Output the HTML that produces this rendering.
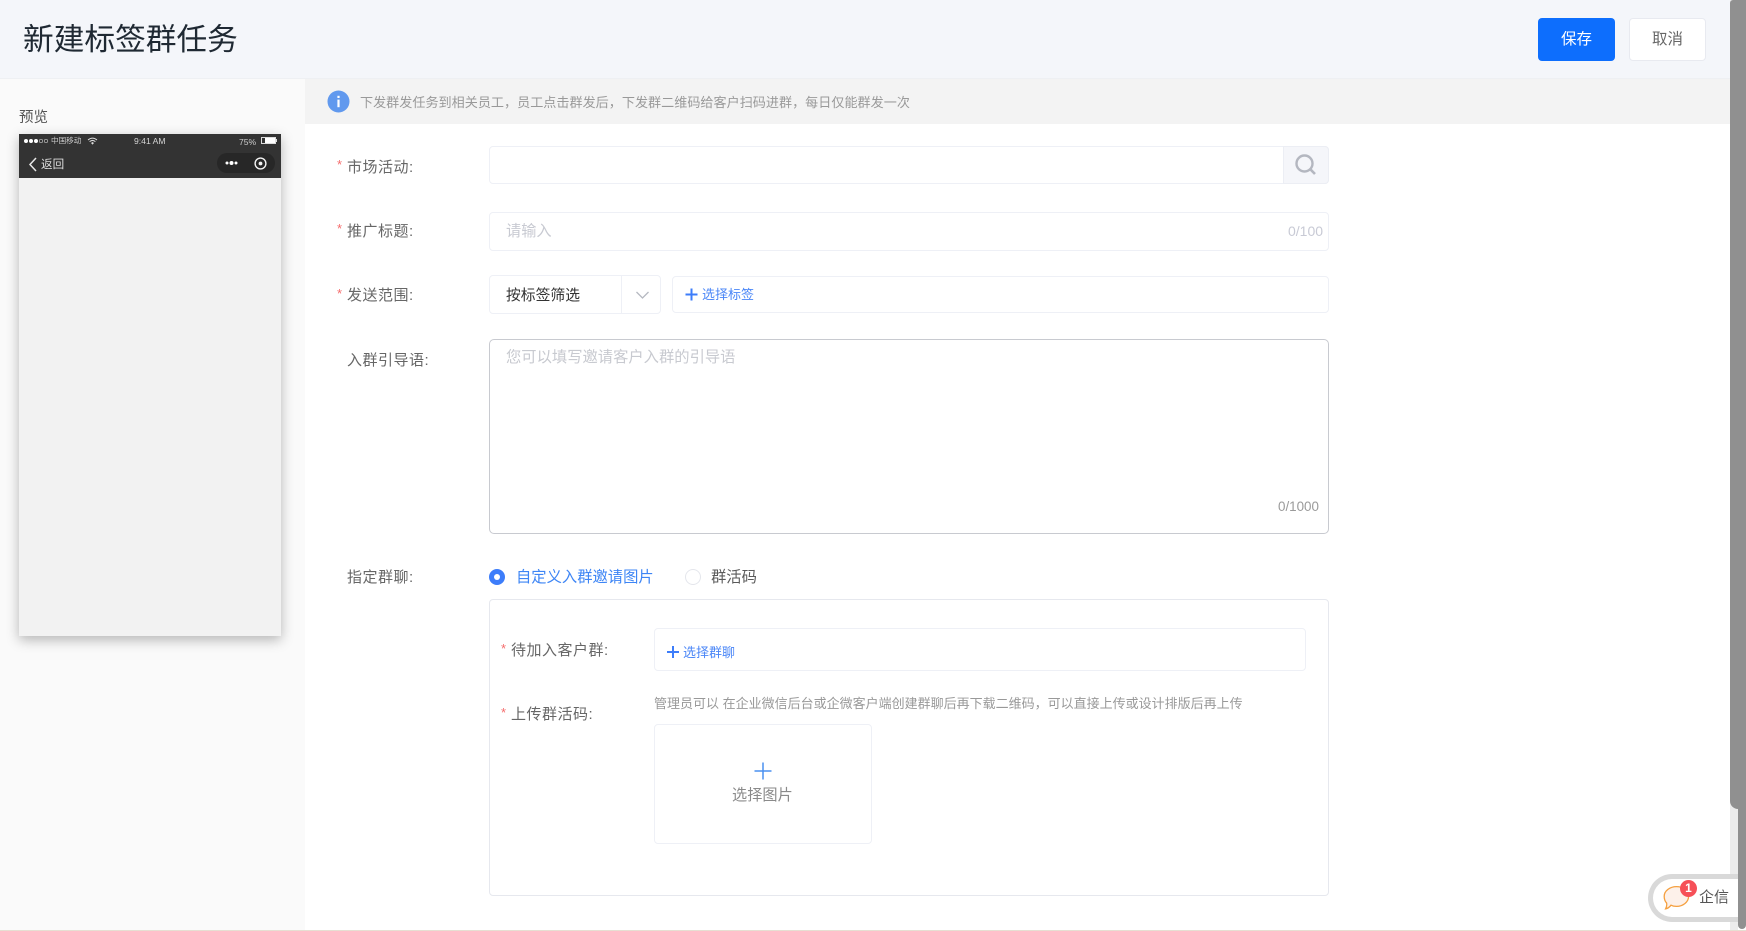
<!DOCTYPE html>
<html lang="zh-CN">
<head>
<meta charset="utf-8">
<title>新建标签群任务</title>
<style>
html,body{margin:0;padding:0;width:1746px;height:931px;overflow:hidden;background:#fff}
body{position:relative;font-family:"Liberation Sans","Noto Sans CJK SC",sans-serif;color:#666}
#w{left:0;top:0;width:1746px;height:931px;overflow:hidden;filter:blur(.35px)}
div,span{position:absolute;box-sizing:border-box}
.t{white-space:nowrap;line-height:20px;height:20px}
.l{font-size:15px;color:#666;letter-spacing:.5px}
.s{color:#f56c6c;font-size:13px;line-height:20px;height:20px}
.b{border:1px solid #eef0f6;border-radius:4px;background:#fff}
svg{position:absolute;display:block}
</style>
</head>
<body>
<div id="w">
<!-- header -->
<div style="left:0;top:0;width:1730px;height:79px;background:#f4f6fa;border-bottom:1px solid #eef0f3"></div>
<div class="t" style="left:23px;top:20px;height:40px;line-height:40px;font-size:30.7px;color:#1f2933">新建标签群任务</div>
<div style="left:1538px;top:18px;width:77px;height:43px;background:#0d6efd;border-radius:4px;color:#fff;font-size:15.5px;line-height:43px;text-align:center">保存</div>
<div style="left:1629px;top:18px;width:77px;height:43px;background:#fff;border:1px solid #e8eaf0;border-radius:4px;color:#666;font-size:15.5px;line-height:41px;text-align:center">取消</div>

<!-- left panel -->
<div style="left:0;top:79px;width:305px;height:851px;background:#fafafa"></div>
<div class="t" style="left:19px;top:108px;font-size:14.5px;color:#555">预览</div>
<div style="left:19px;top:134px;width:262px;height:502px;background:#f2f2f2;box-shadow:0 4px 12px rgba(0,0,0,.28)"></div>
<div style="left:19px;top:134px;width:262px;height:44px;background:#333"></div>
<!-- status bar -->
<svg style="left:23px;top:137px" width="26" height="8" viewBox="0 0 26 8"><circle cx="3" cy="4" r="2" fill="#fff"/><circle cx="8" cy="4" r="2" fill="#fff"/><circle cx="13" cy="4" r="2" fill="#fff"/><circle cx="18" cy="4" r="1.7" fill="none" stroke="#bbb" stroke-width=".7"/><circle cx="23" cy="4" r="1.7" fill="none" stroke="#bbb" stroke-width=".7"/></svg>
<div class="t" style="left:51px;top:131px;font-size:7.6px;color:#ccc">中国移动</div>
<svg style="left:87px;top:137px" width="11" height="8" viewBox="0 0 11 8"><path d="M1 3C4 .5 7 .5 10 3M2.6 4.6C4.6 3 6.4 3 8.4 4.6" fill="none" stroke="#ddd" stroke-width="1"/><path d="M4 6l1.5-1 1.5 1-1.5 1.6z" fill="#ddd"/></svg>
<div class="t" style="left:134px;top:131px;font-size:8.6px;color:#d5d5d5">9:41 AM</div>
<div class="t" style="left:239px;top:132px;font-size:8.6px;color:#ccc">75%</div>
<div style="left:261px;top:137px;width:15px;height:7px;border:1px solid #ddd"><div style="left:3px;top:0;width:10px;height:5px;background:#fff"></div></div>
<div style="left:276px;top:139px;width:1px;height:3px;background:#ddd"></div>
<!-- nav bar -->
<svg style="left:28px;top:157px" width="10" height="15" viewBox="0 0 10 15"><path d="M8 1L2 7.5 8 14" fill="none" stroke="#e8e8e8" stroke-width="1.5"/></svg>
<div class="t" style="left:41px;top:155px;font-size:11.6px;color:#ddd">返回</div>
<div style="left:217px;top:153px;width:58px;height:20px;border-radius:10px;background:#272727"></div>
<svg style="left:224px;top:159px" width="16" height="8" viewBox="0 0 16 8"><circle cx="3" cy="4" r="1.5" fill="#fff"/><circle cx="7.5" cy="4" r="2" fill="#fff"/><circle cx="12" cy="4" r="1.5" fill="#fff"/></svg>
<svg style="left:253px;top:156px" width="15" height="15" viewBox="0 0 15 15"><circle cx="7.5" cy="7.5" r="5.4" fill="none" stroke="#f2f2f2" stroke-width="1.4"/><circle cx="7.5" cy="7.5" r="1.9" fill="#f2f2f2"/></svg>

<!-- info bar -->
<div style="left:305px;top:79px;width:1425px;height:45px;background:#f3f3f3"></div>
<svg style="left:327px;top:90px" width="23" height="23" viewBox="0 0 23 23"><circle cx="11.5" cy="11.5" r="11" fill="#6199ee"/><rect x="10.4" y="9.6" width="2.2" height="7.6" fill="#fff"/><rect x="10.4" y="5.8" width="2.2" height="2.2" fill="#fff"/></svg>
<div class="t" style="left:360px;top:93px;font-size:13.1px;color:#999">下发群发任务到相关员工&#xFF0C;员工点击群发后&#xFF0C;下发群二维码给客户扫码进群&#xFF0C;每日仅能群发一次</div>

<!-- row 1 -->
<div class="s" style="left:337px;top:155px">*</div>
<div class="t l" style="left:347px;top:158px">市场活动:</div>
<div class="b" style="left:489px;top:146px;width:840px;height:38px"></div>
<div style="left:1283px;top:146px;width:46px;height:38px;background:#f5f6fa;border:1px solid #eceef4;border-radius:0 4px 4px 0"></div>
<svg style="left:1294px;top:153px" width="24" height="24" viewBox="0 0 24 24"><circle cx="10.5" cy="10.5" r="8" fill="none" stroke="#b4b7c0" stroke-width="2.4"/><path d="M16.6 16.6L21 21" stroke="#b4b7c0" stroke-width="2.6" fill="none"/></svg>

<!-- row 2 -->
<div class="s" style="left:337px;top:219px">*</div>
<div class="t l" style="left:347px;top:222px">推广标题:</div>
<div class="b" style="left:489px;top:212px;width:840px;height:39px"></div>
<div class="t" style="left:506px;top:222px;font-size:15.2px;color:#c8cad2">请输入</div>
<div class="t" style="left:1288px;top:221px;font-size:14px;color:#c8cad5">0/100</div>

<!-- row 3 -->
<div class="s" style="left:337px;top:284px">*</div>
<div class="t l" style="left:347px;top:286px">发送范围:</div>
<div class="b" style="left:489px;top:275px;width:172px;height:39px"></div>
<div style="left:621px;top:276px;width:1px;height:37px;background:#eef0f6"></div>
<div class="t" style="left:506px;top:286px;font-size:14.8px;color:#333">按标签筛选</div>
<svg style="left:635px;top:290px" width="15" height="10" viewBox="0 0 15 10"><path d="M1.5 2L7.5 8 13.5 2" fill="none" stroke="#b5b8c0" stroke-width="1.3"/></svg>
<div class="b" style="left:672px;top:276px;width:657px;height:37px"></div>
<svg style="left:685px;top:288px" width="13" height="13" viewBox="0 0 13 13"><path d="M6.5 0.5v12M.5 6.5h12" stroke="#3d7dfa" stroke-width="2" fill="none"/></svg>
<div class="t" style="left:702px;top:285px;font-size:13px;color:#4a86f7">选择标签</div>

<!-- row 4 -->
<div class="t l" style="left:347px;top:351px">入群引导语:</div>
<div style="left:489px;top:339px;width:840px;height:195px;border:1.5px solid #c8cad0;border-radius:5px;background:#fff"></div>
<div class="t" style="left:506px;top:348px;font-size:15.3px;color:#c8cad0">您可以填写邀请客户入群的引导语</div>
<div class="t" style="left:1278px;top:497px;font-size:13.4px;color:#9a9a9a">0/1000</div>

<!-- row 5 -->
<div class="t l" style="left:347px;top:568px">指定群聊:</div>
<div style="left:489px;top:569px;width:16px;height:16px;border-radius:50%;background:#3d7dfa"></div>
<div style="left:494px;top:574px;width:6px;height:6px;border-radius:50%;background:#fff"></div>
<div class="t" style="left:516px;top:568px;font-size:15.3px;color:#3d85f5">自定义入群邀请图片</div>
<div style="left:685px;top:569px;width:16px;height:16px;border-radius:50%;border:1px solid #e4e6ec;background:#fff"></div>
<div class="t" style="left:711px;top:568px;font-size:15.3px;color:#5a5a5a">群活码</div>

<!-- inner box -->
<div class="b" style="left:489px;top:599px;width:840px;height:297px;border-color:#e6e8ee"></div>
<div class="s" style="left:501px;top:639px">*</div>
<div class="t l" style="left:511px;top:641px">待加入客户群:</div>
<div class="b" style="left:654px;top:628px;width:652px;height:43px"></div>
<svg style="left:667px;top:646px" width="12" height="12" viewBox="0 0 12 12"><path d="M6 0v12M0 6h12" stroke="#3d7dfa" stroke-width="2" fill="none"/></svg>
<div class="t" style="left:683px;top:643px;font-size:13px;color:#4a86f7">选择群聊</div>
<div class="s" style="left:501px;top:703px">*</div>
<div class="t l" style="left:511px;top:705px">上传群活码:</div>
<div class="t" style="left:654px;top:694px;font-size:13px;color:#999">管理员可以 在企业微信后台或企微客户端创建群聊后再下载二维码&#xFF0C;可以直接上传或设计排版后再上传</div>
<div class="b" style="left:654px;top:724px;width:218px;height:120px"></div>
<svg style="left:754px;top:762px" width="18" height="18" viewBox="0 0 18 18"><path d="M9 0.5v17M.5 9h17" stroke="#4a90f0" stroke-width="1.5" fill="none"/></svg>
<div class="t" style="left:732px;top:786px;font-size:15.2px;color:#8a8a8a">选择图片</div>

<!-- scrollbars -->
<div style="left:1730px;top:0;width:8px;height:930px;background:#ececec"></div>

<!-- widget -->
<div style="left:1648px;top:874px;width:100px;height:48px;border:5px solid #d9d9d9;border-right:0;border-radius:24px 0 0 24px;background:#fff"></div>
<svg style="left:1663px;top:885px" width="28" height="26" viewBox="0 0 28 26"><path d="M13.5 1.6C20 1.6 25.6 5.8 25.6 11.4S20 21.4 13.5 21.4C11.5 21.4 9.5 21 8 20.2 6.6 22 4.4 23.6 2.6 23.8 3.6 22 4 20 3.6 18 2 16.3 1.2 14 1.2 11.4 1.2 5.8 7 1.6 13.5 1.6Z" fill="#fdf1ea" stroke="#f5a040" stroke-width="1.3"/></svg>
<div style="left:1680px;top:880px;width:17px;height:17px;border-radius:50%;background:#f65058;color:#fff;font-size:12px;font-weight:bold;line-height:17px;text-align:center">1</div>
<div class="t" style="left:1699px;top:888px;font-size:15px;color:#555">企信</div>

<div style="left:1730px;top:0;width:16px;height:809px;background:#909090;border-radius:3px 0 8px 8px"></div>
<div style="left:1738px;top:0;width:8px;height:929px;background:#909090;border-radius:0 0 4px 4px"></div>
<div style="left:0;top:930px;width:1746px;height:1px;background:#e6dfd2"></div>
</div>
</body>
</html>
